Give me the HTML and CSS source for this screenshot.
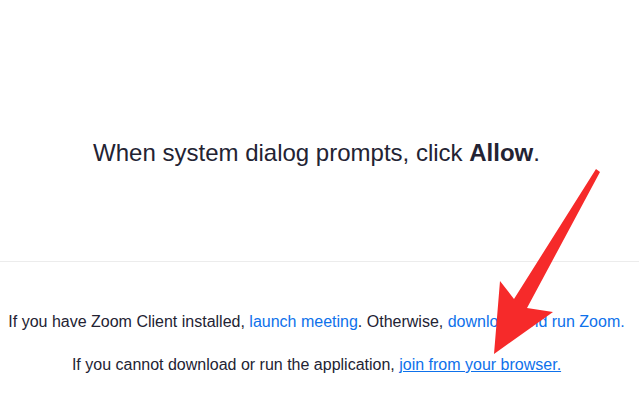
FILE: index.html
```html
<!DOCTYPE html>
<html lang="en">
<head>
<meta charset="utf-8">
<title>Launch Meeting - Zoom</title>
<link rel="stylesheet" href="styles.css">
</head>
<body>
<main class="page">
  <section class="prompt">
    <h1 class="prompt-text">When system dialog prompts, click <strong>Allow</strong>.</h1>
  </section>
  <section class="actions">
    <p class="action-line">If you have Zoom Client installed, <a class="link" href="#">launch meeting</a>. Otherwise, <a class="link" href="#">download and run Zoom.</a></p>
    <p class="action-line">If you cannot download or run the application, <a class="link underlined" href="#">join from your browser.</a></p>
  </section>
  <svg class="arrow" width="639" height="413" viewBox="0 0 639 413" aria-hidden="true">
    <path d="M596,169 L600,172 L527,308 L553,312 L494,354 L500,281 L514,299 Z" fill="#f62a2a"/>
  </svg>
</main>
</body>
</html>
```
FILE: styles.css
```css
html, body {
  margin: 0;
  padding: 0;
  background: #ffffff;
}

body {
  font-family: "Liberation Sans", Arial, Helvetica, sans-serif;
  color: #232333;
}

.page {
  position: relative;
  width: 639px;
  height: 413px;
  overflow: hidden;
}

.prompt {
  height: 262px;
  box-sizing: border-box;
  padding: 137px 6px 0 0;
  border-bottom: 1px solid #ececec;
}

.prompt-text {
  margin: 0;
  font-size: 24px;
  line-height: 32px;
  font-weight: normal;
  text-align: center;
}

.prompt-text strong {
  font-weight: bold;
}

.actions {
  padding: 50px 6px 0 0;
  display: flex;
  flex-direction: column;
  gap: 23px;
}

.action-line {
  margin: 0;
  font-size: 16px;
  line-height: 20px;
  text-align: center;
}

.link {
  color: #0e71eb;
  text-decoration: none;
}

.link.underlined {
  text-decoration: underline;
}

.arrow {
  position: absolute;
  left: 0;
  top: 0;
  pointer-events: none;
}
```
